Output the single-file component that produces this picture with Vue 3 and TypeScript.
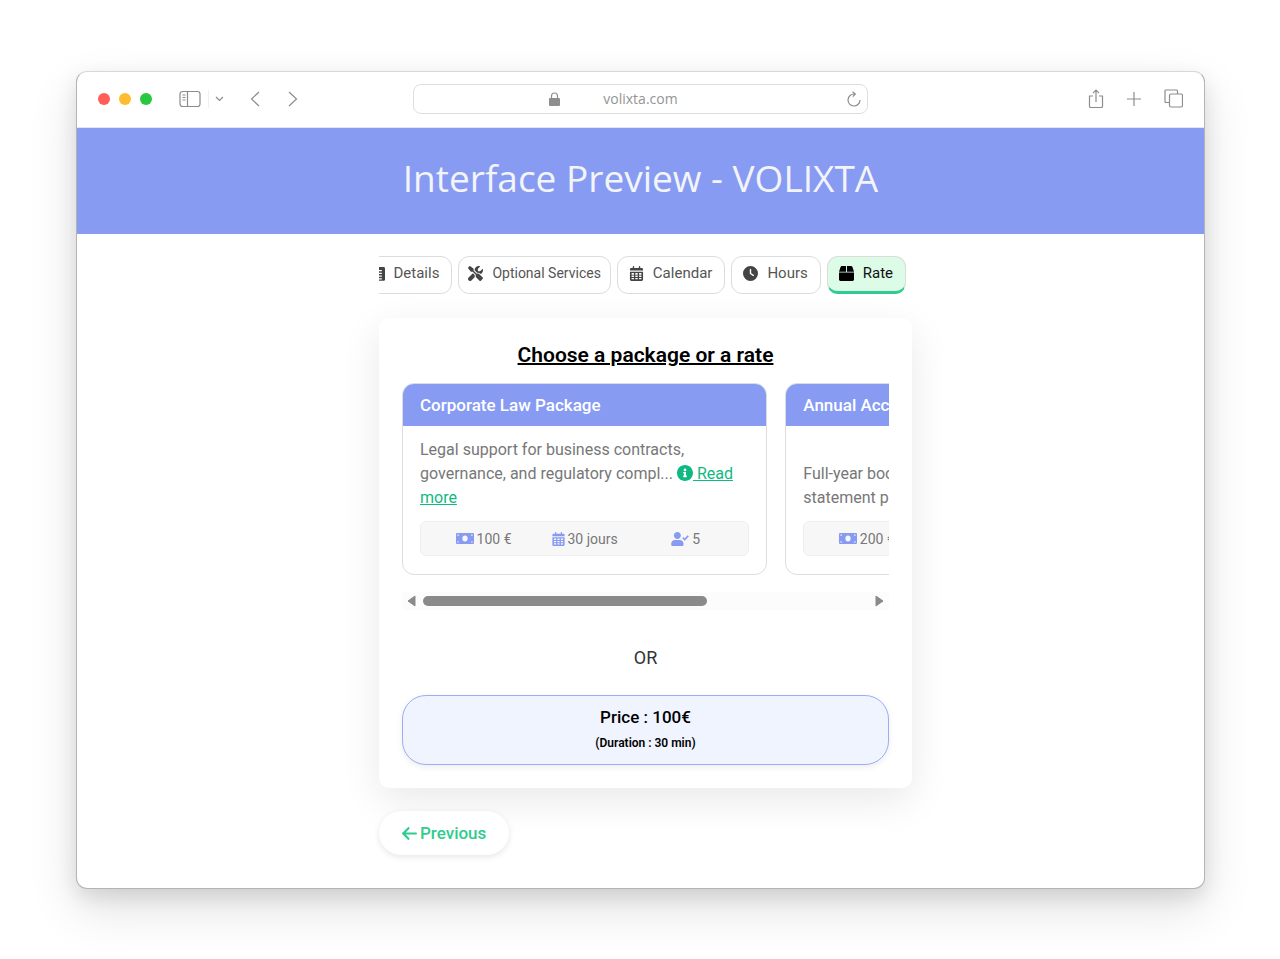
<script setup lang="ts">
import { computed, onMounted, ref } from 'vue'

type IconName = 'list' | 'tools' | 'calendar' | 'clock' | 'box'

interface Step {
  label: string
  icon: IconName
  compact?: boolean
}

interface Offer {
  title: string
  text: string
  more: boolean
  price: string
  duration: string
  seats: number
}

const icons: Record<string, { box: string; d: string }> = {
  list: {
    box: '0 0 384 512',
    d: 'M48 32h288c26 0 48 22 48 48v384c0 26-22 48-48 48H48c-26 0-48-22-48-48V80c0-26 22-48 48-48zM64 136v44h210v-44zM64 232v44h210v-44zM64 328v44h210v-44zM64 424v40h210v-40z',
  },
  tools: {
    box: '0 0 512 512',
    d: 'M78.6 5C69.1-2.4 55.6-1.5 47 7L7 47c-8.5 8.5-9.4 22-2.1 31.6l80 104c4.5 5.9 11.6 9.4 19 9.4h54.1l109 109c-14.7 29-10 65.4 14.3 89.6l112 112c12.5 12.5 32.8 12.5 45.3 0l64-64c12.5-12.5 12.5-32.8 0-45.3l-112-112c-24.2-24.2-60.6-29-89.6-14.3l-109-109V104c0-7.5-3.5-14.5-9.4-19L78.6 5zM19.9 396.1C7.2 408.8 0 426.1 0 444.1C0 481.6 30.4 512 67.9 512c18 0 35.3-7.2 48-19.9L233.7 374.3c-7.8-20.9-9-43.6-3.6-65.1l-61.7-61.7L19.9 396.1zM512 144c0-10.5-1.1-20.7-3.2-30.5c-2.4-11.2-16.1-14.1-24.2-6l-63.9 63.9c-3 3-7.1 4.7-11.3 4.7H352c-8.8 0-16-7.2-16-16V102.6c0-4.2 1.7-8.3 4.7-11.3l63.9-63.9c8.1-8.1 5.2-21.8-6-24.2C388.7 1.1 378.5 0 368 0C288.5 0 224 64.5 224 144l0 .8 85.3 85.3c36-9.1 75.8 .5 104 28.7L429 274.5c49-23 83-72.8 83-130.5z',
  },
  calendar: {
    box: '0 0 448 512',
    d: 'M0 192h448v272c0 26.5-21.5 48-48 48H48c-26.5 0-48-21.5-48-48zM56 240v56h80v-56zM184 240v56h80v-56zM312 240v56h80v-56zM56 328v48h80v-48zM184 328v48h80v-48zM312 328v48h80v-48zM56 408v48h80v-48zM184 408v48h80v-48zM312 408v48h80v-48zM400 64h-48V24c0-13-11-24-24-24s-24 11-24 24v40H144V24c0-13-11-24-24-24S96 11 96 24v40H48C21.5 64 0 85.5 0 112v44h448v-44c0-26.5-21.5-48-48-48z',
  },
  clock: {
    box: '0 0 512 512',
    d: 'M256 0a256 256 0 1 1 0 512A256 256 0 1 1 256 0zM232 120V256c0 8 4 15.5 10.7 20l96 64c11 7.4 25.9 4.4 33.3-6.7s4.4-25.9-6.7-33.3L280 243.2V120c0-13.3-10.7-24-24-24s-24 10.7-24 24z',
  },
  box: {
    box: '0 0 512 512',
    d: 'M509.5 184.6L458.9 32.8C452.4 13.2 434.1 0 413.4 0H272v192h238.7c-.4-2.5-.4-5-1.2-7.4zM240 0H98.6c-20.7 0-39 13.2-45.5 32.8L2.5 184.6c-.8 2.4-.8 4.9-1.2 7.4H240V0zM0 224v240c0 26.5 21.5 48 48 48h416c26.5 0 48-21.5 48-48V224H0z',
  },
}

const steps: Step[] = [
  { label: 'Details', icon: 'list' },
  { label: 'Optional Services', icon: 'tools', compact: true },
  { label: 'Calendar', icon: 'calendar' },
  { label: 'Hours', icon: 'clock' },
  { label: 'Rate', icon: 'box' },
]
const activeStep = ref('Rate')

const offers: Offer[] = [
  {
    title: 'Corporate Law Package',
    text: 'Legal support for business contracts, governance, and regulatory compl...',
    more: true,
    price: '100 €',
    duration: '30 jours',
    seats: 5,
  },
  {
    title: 'Annual Accounting',
    text: 'Full-year bookkeeping and annual financial statement preparation',
    more: false,
    price: '200 €',
    duration: '365 jours',
    seats: 5,
  },
]

const strip = ref<HTMLElement | null>(null)
const visibleShare = ref(0.64)
const scrolledShare = ref(0)

function measure(): void {
  const el = strip.value
  if (!el) return
  visibleShare.value = el.clientWidth / el.scrollWidth
  scrolledShare.value = el.scrollLeft / el.scrollWidth
}

function move(direction: number): void {
  strip.value?.scrollBy({ left: direction * 120, behavior: 'smooth' })
}

const thumbStyle = computed(() => ({
  width: `${visibleShare.value * 100}%`,
  marginLeft: `${scrolledShare.value * 100}%`,
}))

onMounted(measure)
</script>

<template>
  <div class="stage">
    <div class="window">
      <div class="toolbar">
        <div class="side">
          <span class="dot red"></span>
          <span class="dot yellow"></span>
          <span class="dot green"></span>
          <button class="tool sidebar" aria-label="Sidebar">
            <svg width="22" height="18" viewBox="0 0 22 18">
              <rect x="1" y="1.5" width="20" height="15" rx="2.5" />
              <path d="M8.5 1.5v15M3.5 5h3M3.5 7.5h3M3.5 10h3" />
            </svg>
          </button>
          <button class="tool drop" aria-label="Tab groups">
            <svg width="9" height="6" viewBox="0 0 9 6"><path d="M1 1l3.5 3.5L8 1" /></svg>
          </button>
          <button class="tool back" aria-label="Back">
            <svg width="10" height="16" viewBox="0 0 10 16"><path d="M9 1L1.500 8L9 15" /></svg>
          </button>
          <button class="tool forward" aria-label="Forward">
            <svg width="10" height="16" viewBox="0 0 10 16"><path d="M1 1L8.500 8L1 15" /></svg>
          </button>
        </div>
        <div class="address">
          <svg class="lock" width="11" height="14" viewBox="0 0 11 14">
            <rect x="0" y="6" width="11" height="8" rx="1" />
            <path d="M2.500 6V4a3 3 0 0 1 6 0v2" />
          </svg>
          <span class="url">volixta.com</span>
          <button class="tool reload" aria-label="Reload">
            <svg width="14" height="16" viewBox="0 0 14 16">
              <path d="M7.500 3A6 6 0 1 0 13 9M5.500 .8L8.300 3L5.800 5.600" />
            </svg>
          </button>
        </div>
        <div class="side right">
          <button class="tool" aria-label="Share">
            <svg width="16" height="20" viewBox="0 0 16 20">
              <path d="M5 7H1.500v10.500a1 1 0 0 0 1 1h11a1 1 0 0 0 1-1V7H11M8 13V1.500M5 4.200L8 1.200L11 4.200" />
            </svg>
          </button>
          <button class="tool" aria-label="New tab">
            <svg width="14" height="14" viewBox="0 0 14 14"><path d="M7 0v14M0 7h14" /></svg>
          </button>
          <button class="tool" aria-label="Tab overview">
            <svg width="19" height="19" viewBox="0 0 19 19">
              <path d="M5 13.500H2a1 1 0 0 1-1-1V2a1 1 0 0 1 1-1h10.500a1 1 0 0 1 1 1v3" />
              <rect x="5.500" y="5" width="13" height="13" rx="1.500" />
            </svg>
          </button>
        </div>
      </div>

      <header class="banner"><h1>Interface Preview - VOLIXTA</h1></header>

      <main class="content">
        <div class="column">
          <nav class="steps">
            <button
              v-for="step in steps"
              :key="step.label"
              class="step"
              :class="{ active: step.label === activeStep, compact: step.compact }"
              @click="activeStep = step.label"
            >
              <svg :class="step.icon" :viewBox="icons[step.icon].box" height="15">
                <path fill-rule="evenodd" :d="icons[step.icon].d" />
              </svg>
              {{ step.label }}
            </button>
          </nav>

          <section class="panel">
            <h2>Choose a package or a rate</h2>
            <div ref="strip" class="strip" @scroll="measure">
              <article v-for="offer in offers" :key="offer.title" class="offer">
                <h3>{{ offer.title }}</h3>
                <div class="body">
                  <p>
                    {{ offer.text }}
                    <a v-if="offer.more" href="#more"><svg class="info" width="16" height="16" viewBox="8 8 496 496"><path d="M256 8C119.043 8 8 119.083 8 256c0 136.997 111.043 248 248 248s248-111.003 248-248C504 119.083 392.957 8 256 8zm0 110c23.196 0 42 18.804 42 42s-18.804 42-42 42-42-18.804-42-42 18.804-42 42-42zm56 254c0 6.627-5.373 12-12 12h-88c-6.627 0-12-5.373-12-12v-24c0-6.627 5.373-12 12-12h12v-64h-12c-6.627 0-12-5.373-12-12v-24c0-6.627 5.373-12 12-12h64c6.627 0 12 5.373 12 12v100h12c6.627 0 12 5.373 12 12v24z" /></svg>&nbsp;Read more</a>
                  </p>
                  <div class="facts">
                    <span class="fact">
                      <svg width="18" height="11" viewBox="0 0 18 11">
                        <path fill-rule="evenodd" d="M1 0h16a1 1 0 0 1 1 1v9a1 1 0 0 1-1 1H1a1 1 0 0 1-1-1V1a1 1 0 0 1 1-1zM1.500 1.500v1.500a1.500 1.500 0 0 0 1.500-1.500zM1.500 9.500H3A1.500 1.500 0 0 0 1.500 8zM16.500 1.500H15A1.500 1.500 0 0 0 16.500 3zM16.500 9.500V8A1.500 1.500 0 0 0 15 9.500zM9 2.500a2.600 3 0 1 0 0 6a2.600 3 0 1 0 0-6z" />
                      </svg>
                      {{ offer.price }}
                    </span>
                    <span class="fact">
                      <svg width="13" height="14" :viewBox="icons.calendar.box">
                        <path fill-rule="evenodd" :d="icons.calendar.d" />
                      </svg>
                      {{ offer.duration }}
                    </span>
                    <span class="fact">
                      <svg width="18" height="14" viewBox="0 0 640 512">
                        <path d="M224 256c70.7 0 128-57.3 128-128S294.700 0 224 0 96 57.300 96 128s57.300 128 128 128zm89.600 32h-179.200C60.200 288 0 348.200 0 422.400V464c0 26.500 21.500 48 48 48h352c26.500 0 48-21.500 48-48v-41.600c0-74.200-60.200-134.400-134.400-134.400z" />
                        <path class="tick" d="M424 208l66 66l132-132" />
                      </svg>
                      {{ offer.seats }}
                    </span>
                  </div>
                </div>
              </article>
            </div>
            <div class="scrollbar">
              <button aria-label="Scroll left" @click="move(-1)">
                <svg width="9" height="12" viewBox="0 0 9 12"><path d="M8 1v10L1 6z" /></svg>
              </button>
              <div class="track"><div class="thumb" :style="thumbStyle"></div></div>
              <button aria-label="Scroll right" @click="move(1)">
                <svg width="9" height="12" viewBox="0 0 9 12"><path d="M1 1v10L8 6z" /></svg>
              </button>
            </div>
            <p class="or">OR</p>
            <button class="rate">
              <span class="price">Price : 100€</span>
              <span class="duration">(Duration : 30 min)</span>
            </button>
          </section>

          <button class="previous">
            <svg width="15" height="17" viewBox="0 0 448 512">
              <path d="M9.400 233.400c-12.500 12.500-12.500 32.800 0 45.300l160 160c12.500 12.500 32.800 12.500 45.300 0s12.500-32.800 0-45.300L109.200 288 416 288c17.700 0 32-14.300 32-32s-14.300-32-32-32l-306.700 0L214.600 118.600c12.500-12.500 12.500-32.800 0-45.300s-32.800-12.500-45.300 0l-160 160z" />
            </svg>
            Previous
          </button>
        </div>
      </main>
    </div>
  </div>
</template>

<style>
body {
  margin: 0;
  background: #fff;
}
</style>

<style scoped>
* {
  box-sizing: border-box;
}

button {
  font: inherit;
  color: inherit;
  border: 0;
  padding: 0;
  background: none;
  cursor: pointer;
}

h1,
h2,
h3,
p {
  margin: 0;
}

.stage {
  display: flex;
  min-height: 100vh;
  padding: 71px 75px 70px 76px;
  overflow: hidden;
  font-family: Roboto, "Liberation Sans", sans-serif;
}

.window {
  flex: 1;
  min-width: 0;
  display: flex;
  flex-direction: column;
  border: 1px solid #b4b4b4;
  border-top-color: #d8d8d8;
  border-radius: 11px;
  background: #fff;
  overflow: hidden;
  box-shadow: 0 20px 50px rgba(0, 0, 0, 0.12), 0 8px 20px rgba(0, 0, 0, 0.1);
}

.toolbar {
  display: flex;
  align-items: center;
  height: 56px;
  padding: 0 21px 2px;
  border-bottom: 1px solid #e2e4f0;
}

.side {
  flex: 1;
  display: flex;
  align-items: center;
}

.right {
  justify-content: flex-end;
  gap: 23px;
}

.dot {
  width: 12px;
  height: 12px;
  margin-right: 9px;
  border-radius: 50%;
}

.red {
  background: #ff5f57;
}

.yellow {
  background: #febc2e;
}

.green {
  background: #28c840;
}

.tool {
  display: flex;
}

.tool svg {
  fill: none;
  stroke: #8c8c8c;
  stroke-width: 1.2;
}

.sidebar {
  margin-left: 18px;
  padding-right: 7px;
  border-right: 1px solid #f0f0f0;
}

.drop {
  margin-left: 6px;
}

.back {
  margin-left: 26px;
}

.forward {
  margin-left: 28px;
}

.address {
  position: relative;
  flex: 0 1 455px;
  display: flex;
  align-items: center;
  justify-content: center;
  height: 30px;
  border: 1px solid #dedede;
  border-radius: 8px;
}

.lock {
  position: absolute;
  left: 135px;
  fill: #8e8e8e;
}

.lock path {
  fill: none;
  stroke: #8e8e8e;
  stroke-width: 1.2;
}

.url {
  font-family: "Open Sans", "Noto Sans", sans-serif;
  font-size: 14px;
  color: #949494;
}

.reload {
  position: absolute;
  right: 6px;
}

.banner {
  display: flex;
  justify-content: center;
  height: 106px;
  padding-top: 24px;
  background: #879bf3;
}

.banner h1 {
  font-family: "Open Sans", "Noto Sans", sans-serif;
  font-size: 37px;
  font-weight: 400;
  line-height: 52px;
  color: #f3f4f6;
}

.content {
  flex: 1;
  display: flex;
  justify-content: center;
  padding: 22px 0 33px 10px;
}

.column {
  width: 533px;
  max-width: 100%;
}

.steps {
  display: flex;
  justify-content: flex-end;
  gap: 6px;
  padding-right: 6px;
  overflow: hidden;
}

.step {
  flex: none;
  display: flex;
  align-items: center;
  gap: 9px;
  height: 38px;
  padding: 0 12px 4px 11px;
  border: 1px solid #dcdcdc;
  border-radius: 11px;
  font-size: 15px;
  color: #555;
}

.step svg {
  width: 15px;
  fill: #444;
}

.step .list {
  width: 11px;
}

.step.compact {
  padding: 0 9px 4px;
  font-size: 14px;
}

.step.active {
  border-bottom: 3px solid #2ecc8f;
  padding-bottom: 2px;
  background: #dcfce7;
  color: #111;
}

.step.active svg {
  fill: #000;
}

.panel {
  margin-top: 24px;
  padding: 23px;
  border-radius: 10px;
  background: #fff;
  box-shadow: 0 12px 40px rgba(0, 0, 0, 0.09);
}

.panel h2 {
  font-size: 21px;
  font-weight: 600;
  line-height: 28px;
  text-align: center;
  text-decoration: underline;
  text-decoration-thickness: 2px;
  color: #000;
}

.strip {
  display: flex;
  gap: 18px;
  margin-top: 14px;
  overflow-x: auto;
  scrollbar-width: none;
}

.offer {
  flex: none;
  display: flex;
  flex-direction: column;
  width: 75%;
  border: 1px solid #dcdcdc;
  border-radius: 12px;
  overflow: hidden;
}

.offer h3 {
  padding: 0 17px;
  background: #879bf3;
  font-size: 17px;
  font-weight: 500;
  line-height: 42px;
  color: #fff;
}

.body {
  flex: 1;
  display: flex;
  flex-direction: column;
  justify-content: flex-end;
  padding: 12px 17px 18px;
}

.body p {
  font-size: 16px;
  line-height: 24px;
  color: #777;
}

.body a {
  color: #10b981;
}

.info {
  fill: #10b981;
  vertical-align: -2px;
}

.facts {
  display: grid;
  grid-template-columns: repeat(3, 1fr);
  margin-top: 11px;
  padding: 0 12px;
  border: 1px solid #eee;
  border-radius: 6px;
  background: #f7f7f7;
}

.fact {
  display: flex;
  align-items: center;
  justify-content: center;
  gap: 3px;
  height: 33px;
  font-size: 14px;
  color: #777;
  white-space: nowrap;
}

.fact svg {
  fill: #879bf3;
}

.fact .tick {
  fill: none;
  stroke: #879bf3;
  stroke-width: 60;
}

.scrollbar {
  display: flex;
  align-items: center;
  gap: 7px;
  height: 18px;
  margin-top: 17px;
  padding: 0 5px;
  background: #fcfcfc;
}

.scrollbar button {
  display: flex;
}

.scrollbar svg {
  fill: #8a8a8a;
  stroke: #8a8a8a;
  stroke-linejoin: round;
}

.track {
  flex: 1;
  padding-right: 8px;
  overflow: hidden;
}

.thumb {
  height: 10px;
  border-radius: 5px;
  background: #8a8a8a;
}

.or {
  margin-top: 36px;
  font-size: 18px;
  line-height: 24px;
  text-align: center;
  color: #333;
}

.rate {
  display: flex;
  flex-direction: column;
  align-items: center;
  width: 100%;
  height: 70px;
  margin-top: 25px;
  padding-top: 9px;
  border: 1px solid #9dadf5;
  border-radius: 24px;
  background: #f0f4ff;
  box-shadow: 0 2px 6px rgba(0, 0, 0, 0.08);
  color: #000;
}

.price {
  font-size: 17px;
  font-weight: 500;
  line-height: 24px;
}

.duration {
  margin-top: 5px;
  font-size: 12px;
  font-weight: 600;
  line-height: 18px;
}

.previous {
  display: flex;
  align-items: center;
  gap: 3px;
  height: 44px;
  margin-top: 23px;
  padding: 0 23px;
  border-radius: 22px;
  background: #fff;
  box-shadow: 0 2px 6px rgba(0, 0, 0, 0.1);
  font-size: 17px;
  font-weight: 500;
  color: #2ecc8f;
}

.previous svg {
  fill: #2ecc8f;
}
</style>
